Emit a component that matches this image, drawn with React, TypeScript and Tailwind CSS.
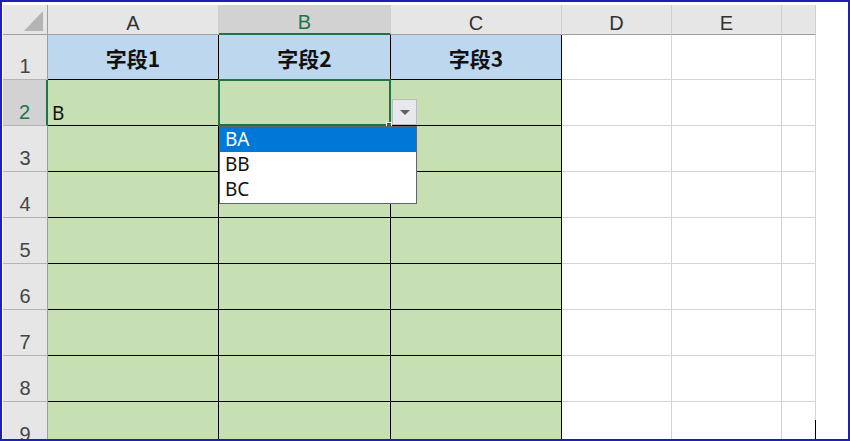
const cols = ['A', 'B', 'C', 'D', 'E', ''];
const fields = ['字段1', '字段2', '字段3'];
const rows = [2, 3, 4, 5, 6, 7, 8, 9];

const latin = { fontFamily: '"Liberation Sans", Arial, sans-serif' };
const body = { fontFamily: '"Noto Sans", "Open Sans", sans-serif' };
const cjk = { fontFamily: '"Noto Sans CJK SC", "Noto Sans", sans-serif' };

function ColHeader({ label, selected }: { label: string; selected: boolean }) {
  return (
    <div
      className={`flex items-center justify-center pt-[6px] text-[20px] leading-none border-r border-[#d0d0d0] ${
        selected
          ? 'bg-[#d2d2d2] text-[#217346] border-b-2 border-b-[#217346]'
          : 'bg-[#e6e6e6] text-[#333] border-b border-b-[#9e9e9e]'
      }`}
      style={latin}
    >
      {label}
    </div>
  );
}

function RowHeader({ n, selected }: { n: number; selected?: boolean }) {
  return (
    <div
      className={`flex items-end justify-center pb-[3px] text-[20px] leading-none border-b border-[#b4b4b4] ${
        selected
          ? 'bg-[#d2d2d2] text-[#217346] border-r-2 border-r-[#217346]'
          : 'bg-[#e6e6e6] text-[#444] border-r border-r-[#9e9e9e]'
      }`}
      style={latin}
    >
      {n}
    </div>
  );
}

function GreenCell({ children }: { children?: React.ReactNode }) {
  return (
    <div
      className="flex items-end pl-[4px] pb-[2px] bg-[#c6e0b4] border-r border-b border-black text-[19px] leading-none text-[#111]"
      style={body}
    >
      {children}
    </div>
  );
}

function BlankCell() {
  return <div className="bg-white border-r border-b border-[#d4d4d4]" />;
}

export default function App() {
  return (
    <div className="w-[850px] h-[441px] overflow-hidden bg-white border-2 border-[#1f1fb8] pt-[3px] pl-[1px]">
      <div className="relative w-[813px]">
        <div className="grid grid-cols-[45px_171px_172px_171px_110px_110px_34px] grid-rows-[30px_45px_repeat(8,46px)]">
          {/* corner */}
          <div className="bg-[#e6e6e6] border-r border-b border-[#9e9e9e] flex items-end justify-end pr-[4px] pb-[3px]">
            <svg width="19" height="20" viewBox="0 0 19 20">
              <polygon points="19,0 19,20 0,20" fill="#b4b4b4" />
            </svg>
          </div>
          {cols.map((c) => (
            <ColHeader key={c || 'f'} label={c} selected={c === 'B'} />
          ))}

          {/* row 1 */}
          <RowHeader n={1} />
          {fields.map((f) => (
            <div
              key={f}
              className="flex items-center justify-center pt-[3px] bg-[#bdd7ee] border-r border-b border-black text-[21px] font-bold text-[#111]"
              style={cjk}
            >
              {f}
            </div>
          ))}
          <BlankCell />
          <BlankCell />
          <BlankCell />

          {rows.map((r) => (
            <div key={r} className="contents">
              <RowHeader n={r} selected={r === 2} />
              <GreenCell>{r === 2 ? 'B' : null}</GreenCell>
              <GreenCell />
              <GreenCell />
              <BlankCell />
              <BlankCell />
              <BlankCell />
            </div>
          ))}
        </div>

        {/* selected cell B2 */}
        <div className="absolute left-[215px] top-[74px] w-[173px] h-[47px] border-2 border-[#217346]" />
        <div className="absolute left-[383px] top-[117px] w-[6px] h-[6px] bg-[#217346] border border-white" />

        {/* dropdown button */}
        <div className="absolute left-[389px] top-[94px] w-[25px] h-[26px] bg-[#e8e8ec] border border-[#bcbcbc] flex items-center justify-center">
          <svg width="10" height="5" viewBox="0 0 10 5">
            <polygon points="0,0 10,0 5,5" fill="#606060" />
          </svg>
        </div>

        {/* dropdown list */}
        <div
          className="absolute left-[216px] top-[121px] w-[198px] h-[78px] bg-white border border-[#646464] flex flex-col text-[19px] leading-none text-[#111]"
          style={body}
        >
          <div className="h-[25px] bg-[#0078d7] text-white pl-[5px] flex items-end pb-[3px]">BA</div>
          <div className="h-[25px] pl-[5px] flex items-end pb-[3px]">BB</div>
          <div className="h-[25px] pl-[5px] flex items-end pb-[3px]">BC</div>
        </div>

        <div className="absolute left-[812px] top-[415px] w-px h-[25px] bg-black" />
      </div>
    </div>
  );
}
